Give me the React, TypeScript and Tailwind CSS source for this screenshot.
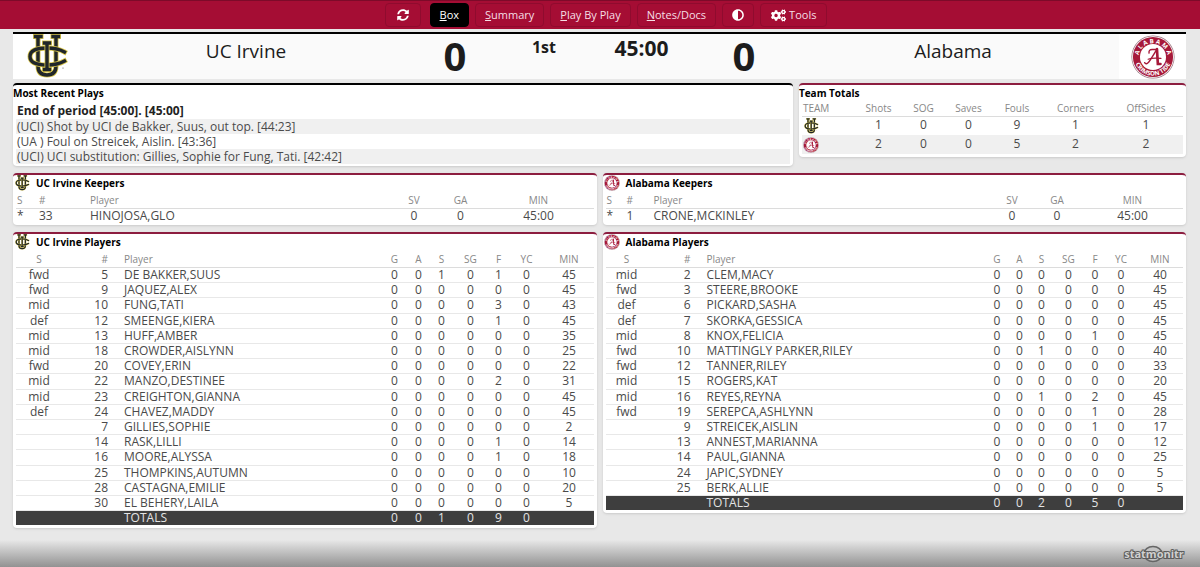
import { FaAdjust, FaCogs, FaSyncAlt } from "react-icons/fa";

type TeamId = "uci" | "ua";

type Keeper = { number: number; name: string; saves: number; against: number; minutes: string };

// position, number, name, G, A, S, SG, F, YC, minutes
type Player = [string, number, string, number, number, number, number, number, number, number];

const plays = [
  "End of period [45:00]. [45:00]",
  "(UCI) Shot by UCI de Bakker, Suus, out top. [44:23]",
  "(UA ) Foul on Streicek, Aislin. [43:36]",
  "(UCI) UCI substitution: Gillies, Sophie for Fung, Tati. [42:42]",
];

const totals: { team: TeamId; values: number[] }[] = [
  { team: "uci", values: [1, 0, 0, 9, 1, 1] },
  { team: "ua", values: [2, 0, 0, 5, 2, 2] },
];

const uciPlayers: Player[] = [
  ["fwd", 5, "DE BAKKER,SUUS", 0, 0, 1, 0, 1, 0, 45],
  ["fwd", 9, "JAQUEZ,ALEX", 0, 0, 0, 0, 0, 0, 45],
  ["mid", 10, "FUNG,TATI", 0, 0, 0, 0, 3, 0, 43],
  ["def", 12, "SMEENGE,KIERA", 0, 0, 0, 0, 1, 0, 45],
  ["mid", 13, "HUFF,AMBER", 0, 0, 0, 0, 0, 0, 35],
  ["mid", 18, "CROWDER,AISLYNN", 0, 0, 0, 0, 0, 0, 25],
  ["fwd", 20, "COVEY,ERIN", 0, 0, 0, 0, 0, 0, 22],
  ["mid", 22, "MANZO,DESTINEE", 0, 0, 0, 0, 2, 0, 31],
  ["mid", 23, "CREIGHTON,GIANNA", 0, 0, 0, 0, 0, 0, 45],
  ["def", 24, "CHAVEZ,MADDY", 0, 0, 0, 0, 0, 0, 45],
  ["", 7, "GILLIES,SOPHIE", 0, 0, 0, 0, 0, 0, 2],
  ["", 14, "RASK,LILLI", 0, 0, 0, 0, 1, 0, 14],
  ["", 16, "MOORE,ALYSSA", 0, 0, 0, 0, 1, 0, 18],
  ["", 25, "THOMPKINS,AUTUMN", 0, 0, 0, 0, 0, 0, 10],
  ["", 28, "CASTAGNA,EMILIE", 0, 0, 0, 0, 0, 0, 20],
  ["", 30, "EL BEHERY,LAILA", 0, 0, 0, 0, 0, 0, 5],
];

const uaPlayers: Player[] = [
  ["mid", 2, "CLEM,MACY", 0, 0, 0, 0, 0, 0, 40],
  ["fwd", 3, "STEERE,BROOKE", 0, 0, 0, 0, 0, 0, 45],
  ["def", 6, "PICKARD,SASHA", 0, 0, 0, 0, 0, 0, 45],
  ["def", 7, "SKORKA,GESSICA", 0, 0, 0, 0, 0, 0, 45],
  ["mid", 8, "KNOX,FELICIA", 0, 0, 0, 0, 1, 0, 45],
  ["fwd", 10, "MATTINGLY PARKER,RILEY", 0, 0, 1, 0, 0, 0, 40],
  ["fwd", 12, "TANNER,RILEY", 0, 0, 0, 0, 0, 0, 33],
  ["mid", 15, "ROGERS,KAT", 0, 0, 0, 0, 0, 0, 20],
  ["mid", 16, "REYES,REYNA", 0, 0, 1, 0, 2, 0, 45],
  ["fwd", 19, "SEREPCA,ASHLYNN", 0, 0, 0, 0, 1, 0, 28],
  ["", 9, "STREICEK,AISLIN", 0, 0, 0, 0, 1, 0, 17],
  ["", 13, "ANNEST,MARIANNA", 0, 0, 0, 0, 0, 0, 12],
  ["", 14, "PAUL,GIANNA", 0, 0, 0, 0, 0, 0, 25],
  ["", 24, "JAPIC,SYDNEY", 0, 0, 0, 0, 0, 0, 5],
  ["", 25, "BERK,ALLIE", 0, 0, 0, 0, 0, 0, 5],
];

const keeperCols = {
  uci: ["w-5", "w-[51px]", "", "w-[47px]", "w-[46px]", "w-[110px]"],
  ua: ["w-[18px]", "w-[27px]", "", "w-10", "w-[50px]", "w-[101px]"],
};

const playerCols = {
  uci: ["w-[46px]", "w-[49px]", "", "w-6", "w-6", "w-[22px]", "w-9", "w-5", "w-9", "w-[49px]"],
  ua: ["w-[42px]", "w-[46px]", "", "w-[22px]", "w-[23px]", "w-[21px]", "w-[33px]", "w-5", "w-8", "w-[46px]"],
};

function UciLogo({ className }: { className: string }) {
  const u = "M13.500 5.500h5.500M31 5.500h5.500M16 5.500V35q0 9 9 9t9-9V5.500";
  const c = "M42.500 21q-7-4-17.500-4Q8 17 8 25.500T25 34q10.500 0 17.500-4";
  const i = "M22.500 12h5M25 12v26.500M22.500 38.500h5";
  return (
    <svg viewBox="2 3 45 45" className={className} fill="none" aria-label="UC Irvine">
      {[u, c, i].map((d) => (
        <g key={d} strokeLinecap="square">
          <path d={d} stroke="#d9c64a" strokeWidth="5" />
          <path d={d} stroke="#20262a" strokeWidth="3.4" />
        </g>
      ))}
      <circle cx="41" cy="37" r="0.6" fill="#555" />
    </svg>
  );
}

function AlabamaLogo({ className, id }: { className: string; id: string }) {
  return (
    <svg viewBox="0 0 50 50" className={className} aria-label="Alabama">
      <circle cx="25" cy="25" r="24.5" fill="#9a7580" />
      <circle cx="25" cy="25" r="23.7" fill="#fff" />
      <circle cx="25" cy="25" r="22.8" fill="#a6193a" />
      <circle cx="25" cy="25" r="14.8" fill="#fff" />
      <path id={`${id}-top`} d="M8.900 30A16.600 16.600 0 1 1 41.100 30" fill="none" />
      <path id={`${id}-bottom`} d="M3.800 25A21.200 21.200 0 0 0 46.200 25" fill="none" />
      <g fill="#fff" fontSize="7" fontWeight="700" textAnchor="middle">
        <text>
          <textPath href={`#${id}-top`} startOffset="50%">A L A B A M A</textPath>
        </text>
        <text>
          <textPath href={`#${id}-bottom`} startOffset="50%">CRIMSON TIDE</textPath>
        </text>
      </g>
      <g fill="none" stroke="#a6193a" strokeLinecap="round">
        <path d="M29.500 16 30.500 33H33.500" strokeWidth="3" />
        <path d="M29.500 16Q23 27 20 31Q17 34 15.500 31.500" strokeWidth="1.6" />
        <path d="M19.500 27.500Q24 25.500 34 26.500" strokeWidth="1.4" />
        <path d="M20.500 20.500Q20 16.500 24 16.500H29" strokeWidth="1.6" />
      </g>
    </svg>
  );
}

function TeamLogo({ team, id, className }: { team: TeamId; id: string; className: string }) {
  return team === "uci" ? <UciLogo className={className} /> : <AlabamaLogo className={className} id={id} />;
}

function NavButton({ label, active }: { label: string; active?: boolean }) {
  return (
    <button
      className={
        active
          ? "h-6 rounded-sm border border-black bg-black px-[9px] text-white"
          : "h-6 rounded-sm border border-[#8f0b2e] px-[9px] text-[#f6dfe5]"
      }
    >
      <span className="underline">{label[0]}</span>
      {label.slice(1)}
    </button>
  );
}

function Navbar() {
  return (
    <nav className="flex h-[29px] items-center justify-center gap-[6px] border-t border-[#7d0a29] bg-[#a50d34] pl-3 text-[11px]">
      <button
        className="mr-[3px] flex h-6 w-9 items-center justify-center rounded-sm border border-[#8f0b2e] text-white"
        aria-label="Refresh"
      >
        <FaSyncAlt size={12} />
      </button>
      <NavButton label="Box" active />
      <NavButton label="Summary" />
      <NavButton label="Play By Play" />
      <NavButton label="Notes/Docs" />
      <button
        className="flex h-6 w-8 items-center justify-center rounded-sm border border-[#8f0b2e] text-white"
        aria-label="Contrast"
      >
        <FaAdjust size={12} />
      </button>
      <button className="flex h-6 items-center gap-[3px] rounded-sm border border-[#8f0b2e] px-[10px] text-[#f6dfe5]">
        <FaCogs size={15} className="text-white" /> Tools
      </button>
    </nav>
  );
}

function Scoreboard() {
  return (
    <header className="flex h-[47px] border-t-2 border-black bg-[#fafafa] text-[#1c1c1c]">
      <div className="flex w-[67px] items-center justify-center bg-white">
        <UciLogo className="h-[45px] w-[45px]" />
      </div>
      <h1 className="flex-1 pt-1 text-center text-[19px] leading-[26px]">UC Irvine</h1>
      <div className="w-[86px] text-center text-[40px] leading-[44px] font-bold">0</div>
      <div className="w-[92px] text-center text-base leading-[26px] font-bold">1st</div>
      <div className="mr-2 w-[103px] text-center text-[21px] leading-[28px] font-bold">45:00</div>
      <div className="w-[86px] text-center text-[40px] leading-[44px] font-bold">0</div>
      <h1 className="flex-1 pt-1 text-center text-[19px] leading-[26px]">Alabama</h1>
      <div className="flex w-[67px] items-center justify-center bg-white">
        <AlabamaLogo className="h-11 w-11" id="score" />
      </div>
    </header>
  );
}

function PanelTitle({ team, id, children }: { team: TeamId; id: string; children: React.ReactNode }) {
  return (
    <h2 className="flex h-4 items-center gap-[6px] pl-px text-[10px] font-bold text-black">
      <TeamLogo team={team} id={id} className="h-4 w-4" />
      {children}
    </h2>
  );
}

function Columns({ widths }: { widths: string[] }) {
  return (
    <colgroup>
      {widths.map((w, i) => (
        <col key={i} className={w} />
      ))}
    </colgroup>
  );
}

function KeepersPanel({ team, title, keeper }: { team: TeamId; title: string; keeper: Keeper }) {
  return (
    <section className="rounded-sm border-t-2 border-[#8c1d3f] bg-white pb-[2px] shadow-sm">
      <PanelTitle team={team} id={`${team}-keepers`}>{title}</PanelTitle>
      <div className="px-[3px]">
        <table className="w-full table-fixed text-left">
          <Columns widths={keeperCols[team]} />
          <thead>
            <tr className="h-[17px] border-b border-[#dcdcdc] text-[10px] leading-[13px] text-[#888]">
              <th className="pt-[3px] pl-px font-normal">S</th>
              <th className="pt-[3px] pl-[3px] font-normal">#</th>
              <th className="pt-[3px] pl-[3px] font-normal">Player</th>
              <th className="pt-[3px] text-center font-normal">SV</th>
              <th className="pt-[3px] text-center font-normal">GA</th>
              <th className="pt-[3px] text-center font-normal">MIN</th>
            </tr>
          </thead>
          <tbody>
            <tr className="h-[15px]">
              <td className="pl-px">*</td>
              <td className="pl-[3px]">{keeper.number}</td>
              <td className="pl-[3px]">{keeper.name}</td>
              <td className="text-center">{keeper.saves}</td>
              <td className="text-center">{keeper.against}</td>
              <td className="text-center">{keeper.minutes}</td>
            </tr>
          </tbody>
        </table>
      </div>
    </section>
  );
}

function PlayersPanel({ team, title, players }: { team: TeamId; title: string; players: Player[] }) {
  const sums = [3, 4, 5, 6, 7, 8].map((i) => players.reduce((sum, p) => sum + Number(p[i]), 0));

  return (
    <section className="rounded-sm border-t-2 border-[#8c1d3f] bg-white pb-[3px] shadow-sm">
      <PanelTitle team={team} id={`${team}-players`}>{title}</PanelTitle>
      <div className="px-[3px]">
        <table className="w-full table-fixed text-center">
          <Columns widths={playerCols[team]} />
          <thead>
            <tr className="h-[17px] border-b border-[#dcdcdc] text-[10px] leading-[13px] text-[#888]">
              <th className="pt-[3px] font-normal">S</th>
              <th className="pt-[3px] pr-[3px] text-right font-normal">#</th>
              <th className="pt-[3px] pl-[13px] text-left font-normal">Player</th>
              {["G", "A", "S", "SG", "F", "YC", "MIN"].map((h) => (
                <th key={h} className="pt-[3px] font-normal">{h}</th>
              ))}
            </tr>
          </thead>
          <tbody>
            {players.map(([position, number, name, ...stats]) => (
              <tr key={number} className="h-[15px] border-b border-[#e8e8e8] nth-[5n+3]:h-4">
                <td>{position}</td>
                <td className="pr-[3px] text-right">{number}</td>
                <td className="pl-[13px] text-left">{name}</td>
                {stats.map((value, i) => (
                  <td key={i}>{value}</td>
                ))}
              </tr>
            ))}
          </tbody>
          <tfoot>
            <tr className="h-[15px] bg-[#3e3e3e] text-[#e4e4e4]">
              <td />
              <td />
              <td className="pl-[13px] text-left">TOTALS</td>
              {sums.map((value, i) => (
                <td key={i}>{value}</td>
              ))}
              <td />
            </tr>
          </tfoot>
        </table>
      </div>
    </section>
  );
}

function RecentPlays() {
  return (
    <section className="flex-1 rounded-sm border-t-2 border-black bg-white pb-[2px] shadow-sm">
      <h2 className="h-[18px] text-[10px] leading-[16px] font-bold text-black">Most Recent Plays</h2>
      <ul className="px-[3px]">
        {plays.map((play) => (
          <li
            key={play}
            className="h-[15px] pl-px leading-[15px] first:h-4 first:font-bold first:text-[#222] even:bg-[#f0f0f0] last:bg-[#f0f0f0]"
          >
            {play}
          </li>
        ))}
      </ul>
    </section>
  );
}

function TeamTotals() {
  return (
    <section className="w-[33%] rounded-sm border-t-2 border-[#8c1d3f] bg-white pb-[3px] shadow-sm">
      <h2 className="h-[17px] text-[10px] leading-[16px] font-bold text-black">Team Totals</h2>
      <div className="px-[3px]">
        <table className="w-full table-fixed text-center">
          <Columns widths={["", "w-[46px]", "w-11", "w-[46px]", "w-[51px]", "w-[66px]", "w-[75px]"]} />
          <thead>
            <tr className="h-[14px] border-b border-[#dcdcdc] text-[10px] leading-[13px] text-[#888]">
              <th className="pl-px text-left font-normal">TEAM</th>
              {["Shots", "SOG", "Saves", "Fouls", "Corners", "OffSides"].map((h) => (
                <th key={h} className="pl-px font-normal">{h}</th>
              ))}
            </tr>
          </thead>
          <tbody>
            {totals.map(({ team, values }) => (
              <tr key={team} className="h-[19px] even:bg-[#f0f0f0]">
                <td>
                  <TeamLogo team={team} id={`${team}-totals`} className="ml-px h-4 w-4" />
                </td>
                {values.map((value, i) => (
                  <td key={i} className="pb-[2px] pl-px">{value}</td>
                ))}
              </tr>
            ))}
          </tbody>
        </table>
      </div>
    </section>
  );
}

function Footer() {
  return (
    <footer className="mt-auto flex h-[27px] items-center justify-end bg-linear-to-b from-[#e8e8e8] to-[#929292] pr-[14px]">
      <svg viewBox="0 0 64 20" className="h-5 w-16" aria-label="statmonitr">
        <ellipse cx="31" cy="10" rx="9" ry="7.5" fill="#c4c4c4" stroke="#666" strokeWidth="1.5" />
        <text
          x="32"
          y="14"
          fontSize="11"
          fontWeight="700"
          textAnchor="middle"
          fill="#d0d0d0"
          stroke="#5c5c5c"
          strokeWidth="2"
          paintOrder="stroke"
        >
          statmonitr
        </text>
      </svg>
    </footer>
  );
}

export default function App() {
  return (
    <div className="flex min-h-screen flex-col bg-[#e8e8e8] font-['Open_Sans','Noto_Sans',sans-serif] text-xs leading-[14px] text-[#4a4a4a]">
      <Navbar />
      <main className="flex flex-col pt-[3px] pr-[14px] pl-[13px]">
        <Scoreboard />
        <div className="mt-1 flex items-start gap-[6px]">
          <RecentPlays />
          <TeamTotals />
        </div>
        <div className="mt-[7px] grid grid-cols-2 items-start gap-x-[6px] gap-y-[7px]">
          <KeepersPanel
            team="uci"
            title="UC Irvine Keepers"
            keeper={{ number: 33, name: "HINOJOSA,GLO", saves: 0, against: 0, minutes: "45:00" }}
          />
          <KeepersPanel
            team="ua"
            title="Alabama Keepers"
            keeper={{ number: 1, name: "CRONE,MCKINLEY", saves: 0, against: 0, minutes: "45:00" }}
          />
          <PlayersPanel team="uci" title="UC Irvine Players" players={uciPlayers} />
          <PlayersPanel team="ua" title="Alabama Players" players={uaPlayers} />
        </div>
      </main>
      <Footer />
    </div>
  );
}
